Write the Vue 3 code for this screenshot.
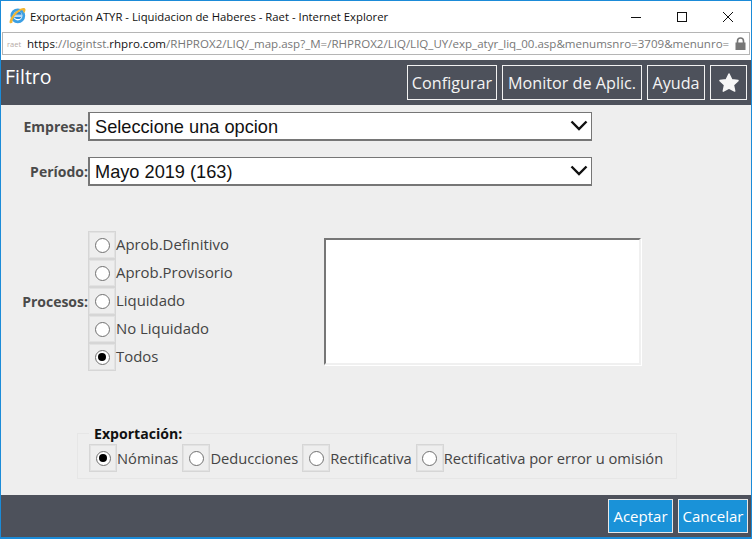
<template>
  <div class="window">
    <div class="titlebar">
      <svg class="ie" width="17" height="17" viewBox="0 0 17 17">
        <circle cx="8.800" cy="8.800" r="6" fill="#fff" stroke="#3b9fe3" stroke-width="2.800" />
        <path d="M4.800 7.800h8c-.2-2-1.700-3.200-3.800-3.200-2.100 0-3.800 1.300-4.200 3.200zM4.800 10h7.800c-.5 1.300-1.800 2.100-3.500 2.100-1.900 0-3.500-.8-4.300-2.100z" fill="#2c8ddb" />
        <rect x="5.500" y="8.300" width="7.500" height="1.300" fill="#2c8ddb" opacity="0.500" />
        <path d="M.6 15.700C.1 12.800 4.500 5 11.500 1.800c2.700-1.200 5-1 5 .9 0 1.200-.8 2.700-1.700 3.700 0-1.700-.7-2.800-1.800-3.500C7.500 5.500 3 11.500 3.500 15.500c-.8.900-2.600 1-2.900.2z" fill="#f2b632" />
      </svg>
      <span class="title-text">Exportación ATYR - Liquidacion de Haberes - Raet - Internet Explorer</span>
      <div class="win-controls">
        <svg width="12" height="12" viewBox="0 0 12 12"><path d="M1 6.500h10" stroke="#111" /></svg>
        <svg width="12" height="12" viewBox="0 0 12 12"><rect x="1.500" y="1.500" width="9" height="9" fill="none" stroke="#111" /></svg>
        <svg width="12" height="12" viewBox="0 0 12 12"><path d="M1 1l10 10M11 1L1 11" stroke="#111" /></svg>
      </div>
    </div>
    <div class="addressbar">
      <span class="favicon">raet</span>
      <span class="url"><b>https</b>://logintst.<b>rhpro.com</b>/RHPROX2/LIQ/_map.asp?_M=/RHPROX2/LIQ/LIQ_UY/exp_atyr_liq_00.asp&amp;menumsnro=3709&amp;menunro=</span>
      <svg class="lock" width="11" height="13" viewBox="0 0 11 13">
        <path d="M2.500 6V4a3 3 0 0 1 6 0v2" fill="none" stroke="#777" stroke-width="1.600" />
        <rect x="0.500" y="5.500" width="10" height="7.500" fill="#777" />
      </svg>
    </div>

    <header class="head">
      <h1>Filtro</h1>
      <div class="head-actions">
        <button class="btn-dark cfg">Configurar</button>
        <button class="btn-dark mon">Monitor de Aplic.</button>
        <button class="btn-dark ayu">Ayuda</button>
        <button class="btn-dark star">
          <svg width="22" height="21" viewBox="0 0 22 21">
            <path d="M11 2l2.800 5.800 6.200.8-4.600 4.300 1.300 6.200L11 16l-5.700 3.100 1.300-6.200L2 8.600l6.200-.8z" fill="#f6f6f6" stroke="#f6f6f6" stroke-width="1.500" stroke-linejoin="round" />
          </svg>
        </button>
      </div>
    </header>

    <main class="form">
      <div class="row select-row">
        <label>Empresa:</label>
        <div class="select">
          <span>Seleccione una opcion</span>
          <svg width="18" height="11" viewBox="0 0 18 11"><path d="M1.500 1.500L9 9l7.500-7.500" fill="none" stroke="#111" stroke-width="2.400" /></svg>
        </div>
      </div>
      <div class="row select-row second">
        <label>Período:</label>
        <div class="select">
          <span>Mayo 2019 (163)</span>
          <svg width="18" height="11" viewBox="0 0 18 11"><path d="M1.500 1.500L9 9l7.500-7.500" fill="none" stroke="#111" stroke-width="2.400" /></svg>
        </div>
      </div>

      <div class="row procesos">
        <label>Procesos:</label>
        <div class="radio-list">
          <div v-for="p in procesos" :key="p" class="radio-item">
            <span class="radio-box"><i :class="['radio', { on: p === 'Todos' }]"></i></span>
            <span class="radio-text">{{ p }}</span>
          </div>
        </div>
        <div class="listbox"></div>
      </div>

      <div class="export">
        <div class="legend">Exportación:</div>
        <div class="export-items">
          <div v-for="e in exportaciones" :key="e" class="radio-item">
            <span class="radio-box"><i :class="['radio', { on: e === 'Nóminas' }]"></i></span>
            <span>{{ e }}</span>
          </div>
        </div>
      </div>
    </main>

    <footer class="foot">
      <button class="btn-blue acp">Aceptar</button>
      <button class="btn-blue can">Cancelar</button>
    </footer>
  </div>
</template>

<script setup>
const procesos = ["Aprob.Definitivo", "Aprob.Provisorio", "Liquidado", "No Liquidado", "Todos"];
const exportaciones = ["Nóminas", "Deducciones", "Rectificativa", "Rectificativa por error u omisión"];
</script>

<style>
html,
body {
  margin: 0;
  overflow: hidden;
}
</style>

<style scoped>
.window {
  width: 752px;
  height: 539px;
  box-sizing: border-box;
  border: 1px solid #1b8bd8;
  border-bottom-width: 2px;
  display: flex;
  flex-direction: column;
  background: #fff;
  font-family: "Open Sans", "Noto Sans", sans-serif;
  color: #444;
}

.titlebar {
  height: 31px;
  display: flex;
  align-items: center;
  padding-left: 8px;
  flex: none;
}
.ie {
  margin: -2px 4px 0 0;
}
.title-text {
  font-size: 11.300px;
  color: #111;
  white-space: nowrap;
}
.win-controls {
  margin-left: auto;
  display: flex;
  gap: 34px;
  padding-right: 17px;
}

.addressbar {
  height: 23px;
  margin: 0 1px;
  border: 1px solid #b5b5b5;
  box-sizing: border-box;
  display: flex;
  align-items: center;
  padding-left: 4px;
  flex: none;
  overflow: hidden;
}
.favicon {
  font-size: 7.500px;
  color: #b5aaa5;
  width: 20px;
  flex: none;
}
.url {
  font-size: 11.560px;
  color: #777;
  white-space: nowrap;
  overflow: hidden;
  flex: 1;
}
.url b {
  font-weight: 400;
  color: #111;
}
.lock {
  margin: 0 3px 0 4px;
  flex: none;
}

.head {
  margin-top: 5px;
  height: 45px;
  background: #4d515b;
  display: flex;
  justify-content: space-between;
  padding: 0 4px;
  flex: none;
}
.head h1 {
  margin: 5px 0 0;
  font-size: 19.500px;
  font-weight: 400;
  color: #fff;
  line-height: 24px;
}
.head-actions {
  display: flex;
  gap: 5px;
  padding-top: 5px;
}
.btn-dark {
  height: 35px;
  padding: 0;
  background: #4d515b;
  border: 1px solid #f2f2f2;
  color: #f4f4f4;
  font: 400 16.200px "Open Sans", sans-serif;
}
.cfg {
  width: 90px;
}
.mon {
  width: 140px;
}
.ayu {
  width: 58px;
}
.star {
  width: 37px;
  display: flex;
  align-items: center;
  justify-content: center;
}

.form {
  flex: none;
  height: 390px;
  box-sizing: border-box;
  background: #eee;
  padding-top: 7px;
}
.row {
  display: flex;
}
.row label {
  width: 87px;
  flex: none;
  text-align: right;
  font-size: 14px;
  font-weight: 700;
  color: #4a4a4a;
  white-space: nowrap;
}
.select-row {
  align-items: center;
}
.second {
  margin-top: 16px;
}
.select {
  width: 504px;
  height: 29px;
  box-sizing: border-box;
  border: 2px solid #767676;
  border-right-width: 1px;
  border-top-width: 1px;
  background: #fff;
  display: flex;
  align-items: center;
  justify-content: space-between;
  padding: 2px 3px 0 5px;
  font: 18.200px "Liberation Sans", sans-serif;
  color: #111;
}
.select svg {
  margin-top: -3px;
}

.procesos {
  margin-top: 45px;
  align-items: center;
}
.radio-list {
  width: 236px;
  flex: none;
}
.radio-item {
  display: flex;
  align-items: center;
  font-size: 14.900px;
  white-space: nowrap;
  color: #444;
}
.radio-text {
  position: relative;
  top: -1px;
}
.radio-box {
  width: 28px;
  height: 28px;
  box-sizing: border-box;
  border: 1px solid #d6d6d6;
  box-shadow: inset 0 0 0 1px #e2e2e2;
  display: flex;
  align-items: center;
  justify-content: center;
  flex: none;
}
.radio {
  width: 15px;
  height: 15px;
  box-sizing: border-box;
  border: 1px solid #707070;
  border-radius: 50%;
  background: #fff;
  display: block;
  position: relative;
}
.radio.on::after {
  content: "";
  position: absolute;
  inset: 2.500px;
  border-radius: 50%;
  background: #000;
}
.listbox {
  width: 317px;
  height: 127px;
  box-sizing: border-box;
  background: #fff;
  border: 2px solid #f0f0f0;
  border-top-color: #767676;
  border-left-color: #767676;
  box-shadow: 1px 1px 0 #fff;
}

.export {
  margin: 62px 0 0 76px;
  width: 600px;
  height: 46px;
  box-sizing: border-box;
  border: 1px solid #e6e6e6;
  padding: 10px 0 0 11px;
  position: relative;
}
.legend {
  position: absolute;
  top: -8px;
  left: 11px;
  padding: 0 5px;
  background: #eee;
  font-size: 14.100px;
  font-weight: 700;
  color: #111;
  line-height: 16px;
}
.export-items {
  display: flex;
  gap: 4px;
}
.export-items .radio-item {
  font-size: 14.700px;
}

.foot {
  height: 42px;
  flex: none;
  background: #4d515b;
  display: flex;
  justify-content: flex-end;
  align-items: flex-start;
  gap: 5px;
  padding: 4px 3px 0 0;
  box-sizing: border-box;
}
.btn-blue {
  height: 34px;
  padding: 0;
  background: #1a92d8;
  border: 1px solid #e8e8e8;
  color: #fff;
  font: 400 15px "Open Sans", sans-serif;
}
.acp {
  width: 65px;
}
.can {
  width: 70px;
}
</style>
